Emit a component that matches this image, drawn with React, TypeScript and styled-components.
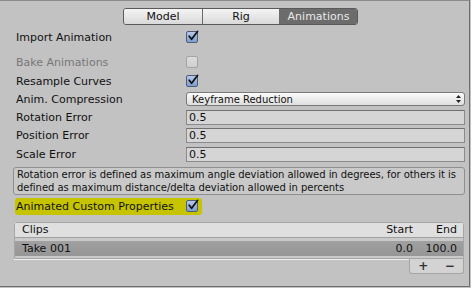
import React from "react";
import styled, { createGlobalStyle } from "styled-components";

const Global = createGlobalStyle`
  html, body { margin: 0; padding: 0; background: #c2c2c2; }
  body { font-family: "DejaVu Sans", Verdana, sans-serif; font-size: 11px; color: #111; }
`;

const Frame = styled.div`
  box-sizing: border-box;
  width: 470px;
  height: 287px;
  border-top: 1px solid #8a8a8a;
  border-right: 1px solid #6e6e6e;
  border-bottom: 1px solid #6e6e6e;
  padding: 7px 4px 0 14px;
  display: flex;
  flex-direction: column;
`;

const TabBar = styled.div`
  display: flex;
  align-self: flex-start;
  margin-left: 109px;
  height: 17px;
  box-sizing: border-box;
  border: 1px solid #5a5a5a;
  border-radius: 3px;
  overflow: hidden;
`;

const Tab = styled.div<{ $active?: boolean; $first?: boolean; $w: number }>`
  width: ${(p) => p.$w}px;
  box-sizing: border-box;
  display: flex;
  align-items: center;
  justify-content: center;
  border-left: ${(p) => (p.$first ? "none" : "1px solid #6a6a6a")};
  background: ${(p) =>
    p.$active ? "#6c6c6c" : "linear-gradient(#f4f4f4, #d9d9d9)"};
  color: ${(p) => (p.$active ? "#e8e8e8" : "#111")};
  line-height: 15px;
`;

const Row = styled.div<{ $h?: number; $mt?: number }>`
  display: flex;
  align-items: center;
  height: ${(p) => p.$h ?? 18}px;
  margin-top: ${(p) => p.$mt ?? 0}px;
`;

const Label = styled.div<{ $disabled?: boolean }>`
  width: 170px;
  padding-left: 2px;
  flex: none;
  color: ${(p) => (p.$disabled ? "#777" : "#111")};
`;

const Box = styled.div<{ $checked?: boolean; $disabled?: boolean }>`
  width: 12px;
  height: 12px;
  box-sizing: border-box;
  border-radius: 2px;
  border: 1px solid ${(p) => (p.$checked ? "#4d5c78" : "#a3a3a3")};
  background: ${(p) =>
    p.$checked
      ? "linear-gradient(#b5c9ea, #7f9dcf)"
      : p.$disabled
      ? "linear-gradient(#dcdcdc, #cfcfcf)"
      : "#ddd"};
  position: relative;
  flex: none;
  svg { position: absolute; left: 0; top: -2px; }
`;

const Check = ({ checked, disabled }: { checked?: boolean; disabled?: boolean }) => (
  <Box $checked={checked} $disabled={disabled}>
    {checked && (
      <svg width="12" height="12" viewBox="0 0 12 12">
        <path d="M2.2 6.2 L4.6 9.2 L10.5 1.5" fill="none" stroke="#111" strokeWidth="1.8" strokeLinecap="round" strokeLinejoin="round" />
      </svg>
    )}
  </Box>
);

const Dropdown = styled.div`
  flex: 1;
  height: 14px;
  box-sizing: border-box;
  border: 1px solid #7a7a7a;
  border-radius: 3px;
  background: linear-gradient(#fbfbfb, #dedede);
  display: flex;
  align-items: center;
  justify-content: space-between;
  padding: 0 3px 0 5px;
  font-size: 10px;
`;

const Field = styled.div`
  flex: 1;
  height: 15px;
  box-sizing: border-box;
  border: 1px solid #8a8a8a;
  border-top-color: #707070;
  background: #d5d5d5;
  padding-left: 2px;
  display: flex;
  align-items: center;
`;

const HelpBox = styled.div`
  margin: 3px 0 0 -1px;
  box-sizing: border-box;
  border: 1px solid #8f8f8f;
  border-radius: 3px;
  background: #c9c9c9;
  padding: 0 2px 0 3px;
  font-size: 10px;
  line-height: 13px;
  letter-spacing: -0.05px;
  color: #111;
`;

const Highlight = styled.div`
  display: flex;
  align-items: center;
  align-self: flex-start;
  height: 17px;
  margin-top: 3px;
  margin-left: 1px;
  padding-right: 4px;
  background: #c6c400;
  border-radius: 3px;
`;

const HLLabel = styled.div`
  width: 170px;
  padding-left: 1px;
`;

const List = styled.div`
  margin-top: 7px;
  width: 450px;
  display: flex;
  flex-direction: column;
`;

const ListBody = styled.div`
  border: 1px solid #a5a5a5;
  border-radius: 3px 3px 0 0;
  background: #c9c9c9;
  box-shadow: 0 1px 0 #f0f0f0;
`;

const ListHeader = styled.div`
  display: grid;
  grid-template-columns: 1fr 50px 44px;
  height: 14px;
  align-items: center;
  padding: 0 6px 0 7px;
  background: #dfdfdf;
  border-bottom: 1px solid #a0a0a0;
`;

const ListRow = styled.div<{ $selected?: boolean }>`
  display: grid;
  grid-template-columns: 1fr 50px 44px;
  height: 15px;
  margin: 3px 0 2px 0;
  align-items: center;
  padding: 0 6px 0 7px;
  background: ${(p) => (p.$selected ? "linear-gradient(#a0a0a0, #969696)" : "transparent")};
`;

const Right = styled.span`
  text-align: right;
`;

const Footer = styled.div`
  align-self: flex-end;
  width: 55px;
  height: 15px;
  box-sizing: border-box;
  border: 1px solid #a5a5a5;
  border-top: none;
  border-radius: 0 0 3px 3px;
  background: #d3d3d3;
  display: flex;
  justify-content: space-around;
  align-items: center;
  font-weight: bold;
  font-size: 12px;
  color: #333;
`;

const Arrows = () => (
  <svg width="5" height="8" viewBox="0 0 5 8">
    <path d="M2.5 0 L5 3 L0 3 Z M0 5 L5 5 L2.5 8 Z" fill="#222" />
  </svg>
);

export default function App() {
  return (
    <>
      <Global />
      <Frame>
        <TabBar>
          <Tab $w={78} $first>Model</Tab>
          <Tab $w={77}>Rig</Tab>
          <Tab $w={78} $active>Animations</Tab>
        </TabBar>
        <Row $mt={3}>
          <Label>Import Animation</Label>
          <Check checked />
        </Row>
        <Row $mt={7}>
          <Label $disabled>Bake Animations</Label>
          <Check disabled />
        </Row>
        <Row $mt={1}>
          <Label>Resample Curves</Label>
          <Check checked />
        </Row>
        <Row>
          <Label>Anim. Compression</Label>
          <Dropdown>
            <span>Keyframe Reduction</span>
            <Arrows />
          </Dropdown>
        </Row>
        <Row $h={18.5}>
          <Label>Rotation Error</Label>
          <Field>0.5</Field>
        </Row>
        <Row $h={18.5}>
          <Label>Position Error</Label>
          <Field>0.5</Field>
        </Row>
        <Row $h={18.5}>
          <Label>Scale Error</Label>
          <Field>0.5</Field>
        </Row>
        <HelpBox>
          Rotation error is defined as maximum angle deviation allowed in degrees, for others it is defined as maximum distance/delta deviation allowed in percents
        </HelpBox>
        <Highlight>
          <HLLabel>Animated Custom Properties</HLLabel>
          <Check checked />
        </Highlight>
        <List>
          <ListBody>
            <ListHeader>
              <span>Clips</span>
              <Right>Start</Right>
              <Right>End</Right>
            </ListHeader>
            <ListRow $selected>
              <span>Take 001</span>
              <Right>0.0</Right>
              <Right>100.0</Right>
            </ListRow>
          </ListBody>
          <Footer>
            <span>+</span>
            <span>−</span>
          </Footer>
        </List>
      </Frame>
    </>
  );
}
